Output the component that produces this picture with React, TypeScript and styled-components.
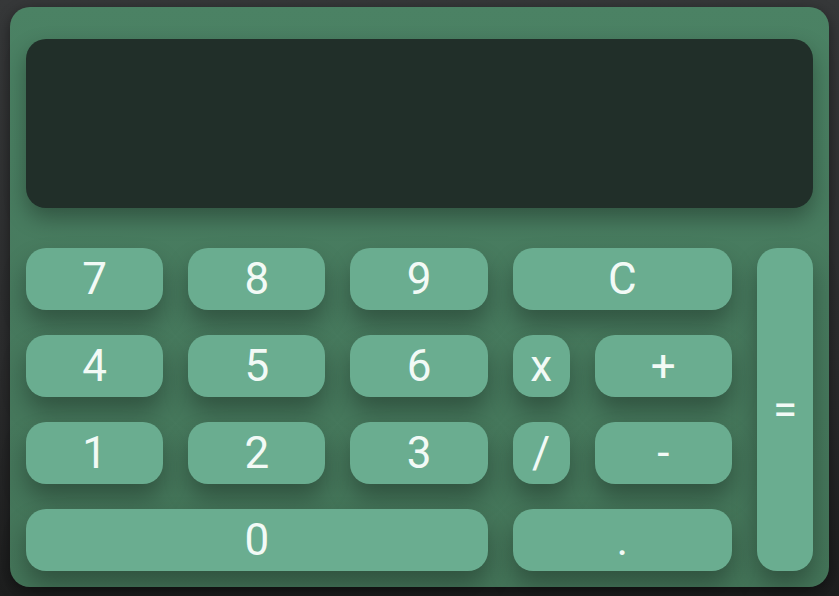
import React from "react";
import styled, { createGlobalStyle } from "styled-components";

const Global = createGlobalStyle`
  html, body { margin: 0; padding: 0; }
  body {
    width: 839px;
    height: 596px;
    background: linear-gradient(180deg, #363839 0%, #2c2d2e 60%, #1d1e1e 100%);
    font-family: Roboto, "Liberation Sans", sans-serif;
    overflow: hidden;
  }
`;

const Page = styled.div`
  box-sizing: border-box;
  width: 839px;
  height: 596px;
  padding: 7px 10px 9px 10px;
`;

const Body = styled.div`
  box-sizing: border-box;
  height: 580px;
  border-radius: 20px;
  background: linear-gradient(180deg, #4b8264 0%, #477a5e 50%, #447559 100%);
  box-shadow: 0 4px 14px rgba(0, 0, 0, 0.45);
  padding: 32px 16px 16px 16px;
  display: flex;
  flex-direction: column;
  gap: 40px;
`;

const Display = styled.div`
  height: 169px;
  border-radius: 20px;
  background: #212f29;
  box-shadow: 0 10px 22px rgba(0, 0, 0, 0.32);
`;

const Keys = styled.div`
  display: grid;
  grid-template-columns: 137fr 137fr 137fr 57fr 137fr 56fr;
  grid-template-rows: repeat(4, 62px);
  column-gap: 25px;
  row-gap: 25px;
`;

const Key = styled.button<{ $col?: string; $row?: string }>`
  grid-column: ${(p) => p.$col ?? "auto"};
  grid-row: ${(p) => p.$row ?? "auto"};
  border: none;
  margin: 0;
  padding: 0;
  border-radius: 20px;
  background: #6aad90;
  color: #f2faf6;
  font-family: Roboto, "Liberation Sans", sans-serif;
  font-size: 44px;
  font-weight: 400;
  line-height: 1;
  display: flex;
  align-items: center;
  justify-content: center;
  box-shadow: 0 14px 24px rgba(0, 0, 0, 0.3);
  cursor: pointer;
`;

export default function App() {
  return (
    <>
      <Global />
      <Page>
        <Body>
          <Display />
          <Keys>
            <Key $col="1" $row="1">7</Key>
            <Key $col="2" $row="1">8</Key>
            <Key $col="3" $row="1">9</Key>
            <Key $col="4 / span 2" $row="1">C</Key>
            <Key $col="6" $row="1 / span 4">=</Key>
            <Key $col="1" $row="2">4</Key>
            <Key $col="2" $row="2">5</Key>
            <Key $col="3" $row="2">6</Key>
            <Key $col="4" $row="2">x</Key>
            <Key $col="5" $row="2">+</Key>
            <Key $col="1" $row="3">1</Key>
            <Key $col="2" $row="3">2</Key>
            <Key $col="3" $row="3">3</Key>
            <Key $col="4" $row="3">/</Key>
            <Key $col="5" $row="3">-</Key>
            <Key $col="1 / span 3" $row="4">0</Key>
            <Key $col="4 / span 2" $row="4">.</Key>
          </Keys>
        </Body>
      </Page>
    </>
  );
}
